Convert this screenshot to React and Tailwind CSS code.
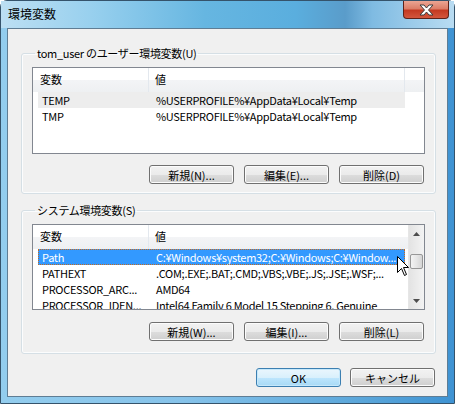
const font = "font-['Noto_Sans_CJK_JP','Liberation_Sans',sans-serif]"

function Button({ children, primary }) {
  if (primary) {
    return (
      <button className="h-[19px] w-[85px] rounded-[3px] border border-[#3c7fb1] bg-[linear-gradient(#eaf6fd_0%,#d9f0fc_50%,#bee6fd_51%,#a7d9f5_100%)] text-[11px] leading-[16px] text-black shadow-[inset_0_0_0_1px_#c6e8fb]">
        {children}
      </button>
    )
  }
  return (
    <button className="h-[19px] w-[85px] rounded-[3px] border border-[#707070] bg-[linear-gradient(#f2f2f2_0%,#ebebeb_50%,#dddddd_51%,#cfcfcf_100%)] text-[11px] leading-[16px] text-black shadow-[inset_0_0_0_1px_#fcfcfc]">
      {children}
    </button>
  )
}

function Header({ scroll }) {
  return (
    <div className="flex h-[24px] bg-[linear-gradient(#ffffff_0%,#ffffff_50%,#f3f4f6_51%,#eef0f2_100%)] text-[11px] leading-[23px]">
      <div className="w-[116px] border-r border-[#e3e8ee] pl-[7px]">変数</div>
      <div className={scroll ? 'flex-1 pl-[6px]' : 'w-[256px] border-r border-[#e3e8ee] pl-[6px]'}>値</div>
      {!scroll && <div className="flex-1" />}
    </div>
  )
}

function Row({ name, value, state }) {
  const base = 'flex h-[16px] w-[367px] ml-[5px] text-[11px] leading-[16px] tracking-[-0.3px] whitespace-nowrap'
  let cls = base + ' text-black'
  if (state === 'grey') cls = base + ' bg-[#ededed] text-black'
  if (state === 'sel') cls = base + ' bg-[#3399ff] text-white outline-1 outline-dotted outline-[#c66a1e] -outline-offset-1'
  return (
    <div className={cls}>
      <div className="w-[114px] overflow-hidden pl-[4px]">{name}</div>
      <div className="flex-1 overflow-hidden pl-[4px]">{value}</div>
    </div>
  )
}

function Group({ label, children, bottomPad }) {
  return (
    <fieldset className={`rounded-[3px] border border-[#d5dfe5] px-[10px] ${bottomPad} shadow-[inset_0_0_0_1px_#fbfcfd]`}>
      <legend className="ml-[3px] px-[2px] text-[11px] leading-[15px] tracking-[-0.3px] text-black">{label}</legend>
      {children}
    </fieldset>
  )
}

function Arrow({ up }) {
  return (
    <svg width="7" height="4" viewBox="0 0 7 4">
      <path d={up ? 'M0 4 L3.5 0 L7 4 Z' : 'M0 0 L3.5 4 L7 0 Z'} fill="#4d4d4d" />
    </svg>
  )
}

export default function App() {
  return (
    <div className={`relative h-[404px] w-[455px] overflow-hidden bg-white ${font}`}>
      <div className="flex h-full w-full flex-col rounded-t-[7px] border border-[#35536b] bg-[linear-gradient(90deg,#93cdee_0%,#86c3ea_40%,#5aa6da_80%,#3f93d3_100%)]">
        <div className="flex h-[27px] items-start justify-between bg-[linear-gradient(90deg,#bcdff3_0%,#98d0ee_20%,#66b6e1_45%,#5aaede_65%,#5a9cca_76%,#7fbbe2_82%,#b9dcf2_100%)]">
          <span className="pl-[7px] pt-[5px] text-[12px] leading-[16px] text-black">環境変数</span>
          <div className="mr-[5px] flex h-[18px] w-[46px] items-center justify-center rounded-b-[4px] border border-t-0 border-[#5e2219] bg-[linear-gradient(#eba593_0%,#dc7e68_45%,#c43a22_55%,#d3563d_100%)]">
            <svg width="15" height="12" viewBox="0 0 15 12">
              <path d="M1 1 L5 1 L7.5 4 L10 1 L14 1 L9.5 6 L14 11 L10 11 L7.5 8 L5 11 L1 11 L5.5 6 Z" fill="#ffffff" stroke="#3c3c3c" strokeWidth="1" strokeLinejoin="round" />
            </svg>
          </div>
        </div>

        <div className="mx-[6px] mb-[6px] flex flex-1 flex-col border border-[#5f7d94] bg-[#f0f0f0] pl-[13px] pr-[11px] pt-[17px]">
          <Group label="tom_user のユーザー環境変数(U)" bottomPad="pb-[9px]">
            <div className="mt-[6px] h-[87px] border border-[#828790] bg-white">
              <Header />
              <Row name="TEMP" value="%USERPROFILE%¥AppData¥Local¥Temp" state="grey" />
              <Row name="TMP" value="%USERPROFILE%¥AppData¥Local¥Temp" />
            </div>
            <div className="mt-[11px] flex justify-end gap-[10px] pr-[1px]">
              <Button>新規(N)...</Button>
              <Button>編集(E)...</Button>
              <Button>削除(D)</Button>
            </div>
          </Group>

          <div className="mt-[9px]">
            <Group label="システム環境変数(S)" bottomPad="pb-[12px]">
              <div className="mt-[6px] flex h-[86px] border border-[#828790] bg-white">
                <div className="flex-1 overflow-hidden">
                  <Header scroll />
                  <Row name="Path" value="C:¥Windows¥system32;C:¥Windows;C:¥Window..." state="sel" />
                  <Row name="PATHEXT" value=".COM;.EXE;.BAT;.CMD;.VBS;.VBE;.JS;.JSE;.WSF;..." />
                  <Row name="PROCESSOR_ARC..." value="AMD64" />
                  <Row name="PROCESSOR_IDEN..." value="Intel64 Family 6 Model 15 Stepping 6, Genuine" />
                </div>
                <div className="flex w-[16px] flex-col border-l border-[#e6e6e6] bg-[linear-gradient(90deg,#e3e3e3,#f3f3f3)]">
                  <div className="flex h-[17px] items-center justify-center">
                    <Arrow up />
                  </div>
                  <div className="mt-[12px] mx-[1px] h-[15px] rounded-[2px] border border-[#979797] bg-[linear-gradient(90deg,#f3f3f3,#e6e6e6_50%,#d5d5d5)]" />
                  <div className="flex-1" />
                  <div className="flex h-[17px] items-center justify-center">
                    <Arrow />
                  </div>
                </div>
              </div>
              <div className="mt-[12px] flex justify-end gap-[10px] pr-[1px]">
                <Button>新規(W)...</Button>
                <Button>編集(I)...</Button>
                <Button>削除(L)</Button>
              </div>
            </Group>
          </div>

          <div className="mt-[14px] flex justify-end gap-[9px] pr-[1px]">
            <Button primary>OK</Button>
            <Button>キャンセル</Button>
          </div>
        </div>
      </div>

      <svg className="absolute left-[397px] top-[256px]" width="13" height="21" viewBox="0 0 13 21">
        <path d="M0.5 0.5 L0.5 16.5 L4.5 12.5 L7.5 19.5 L9.5 18.5 L6.5 11.5 L11.5 11.5 Z" fill="#ffffff" stroke="#000000" strokeWidth="1" strokeLinejoin="round" />
      </svg>
    </div>
  )
}
